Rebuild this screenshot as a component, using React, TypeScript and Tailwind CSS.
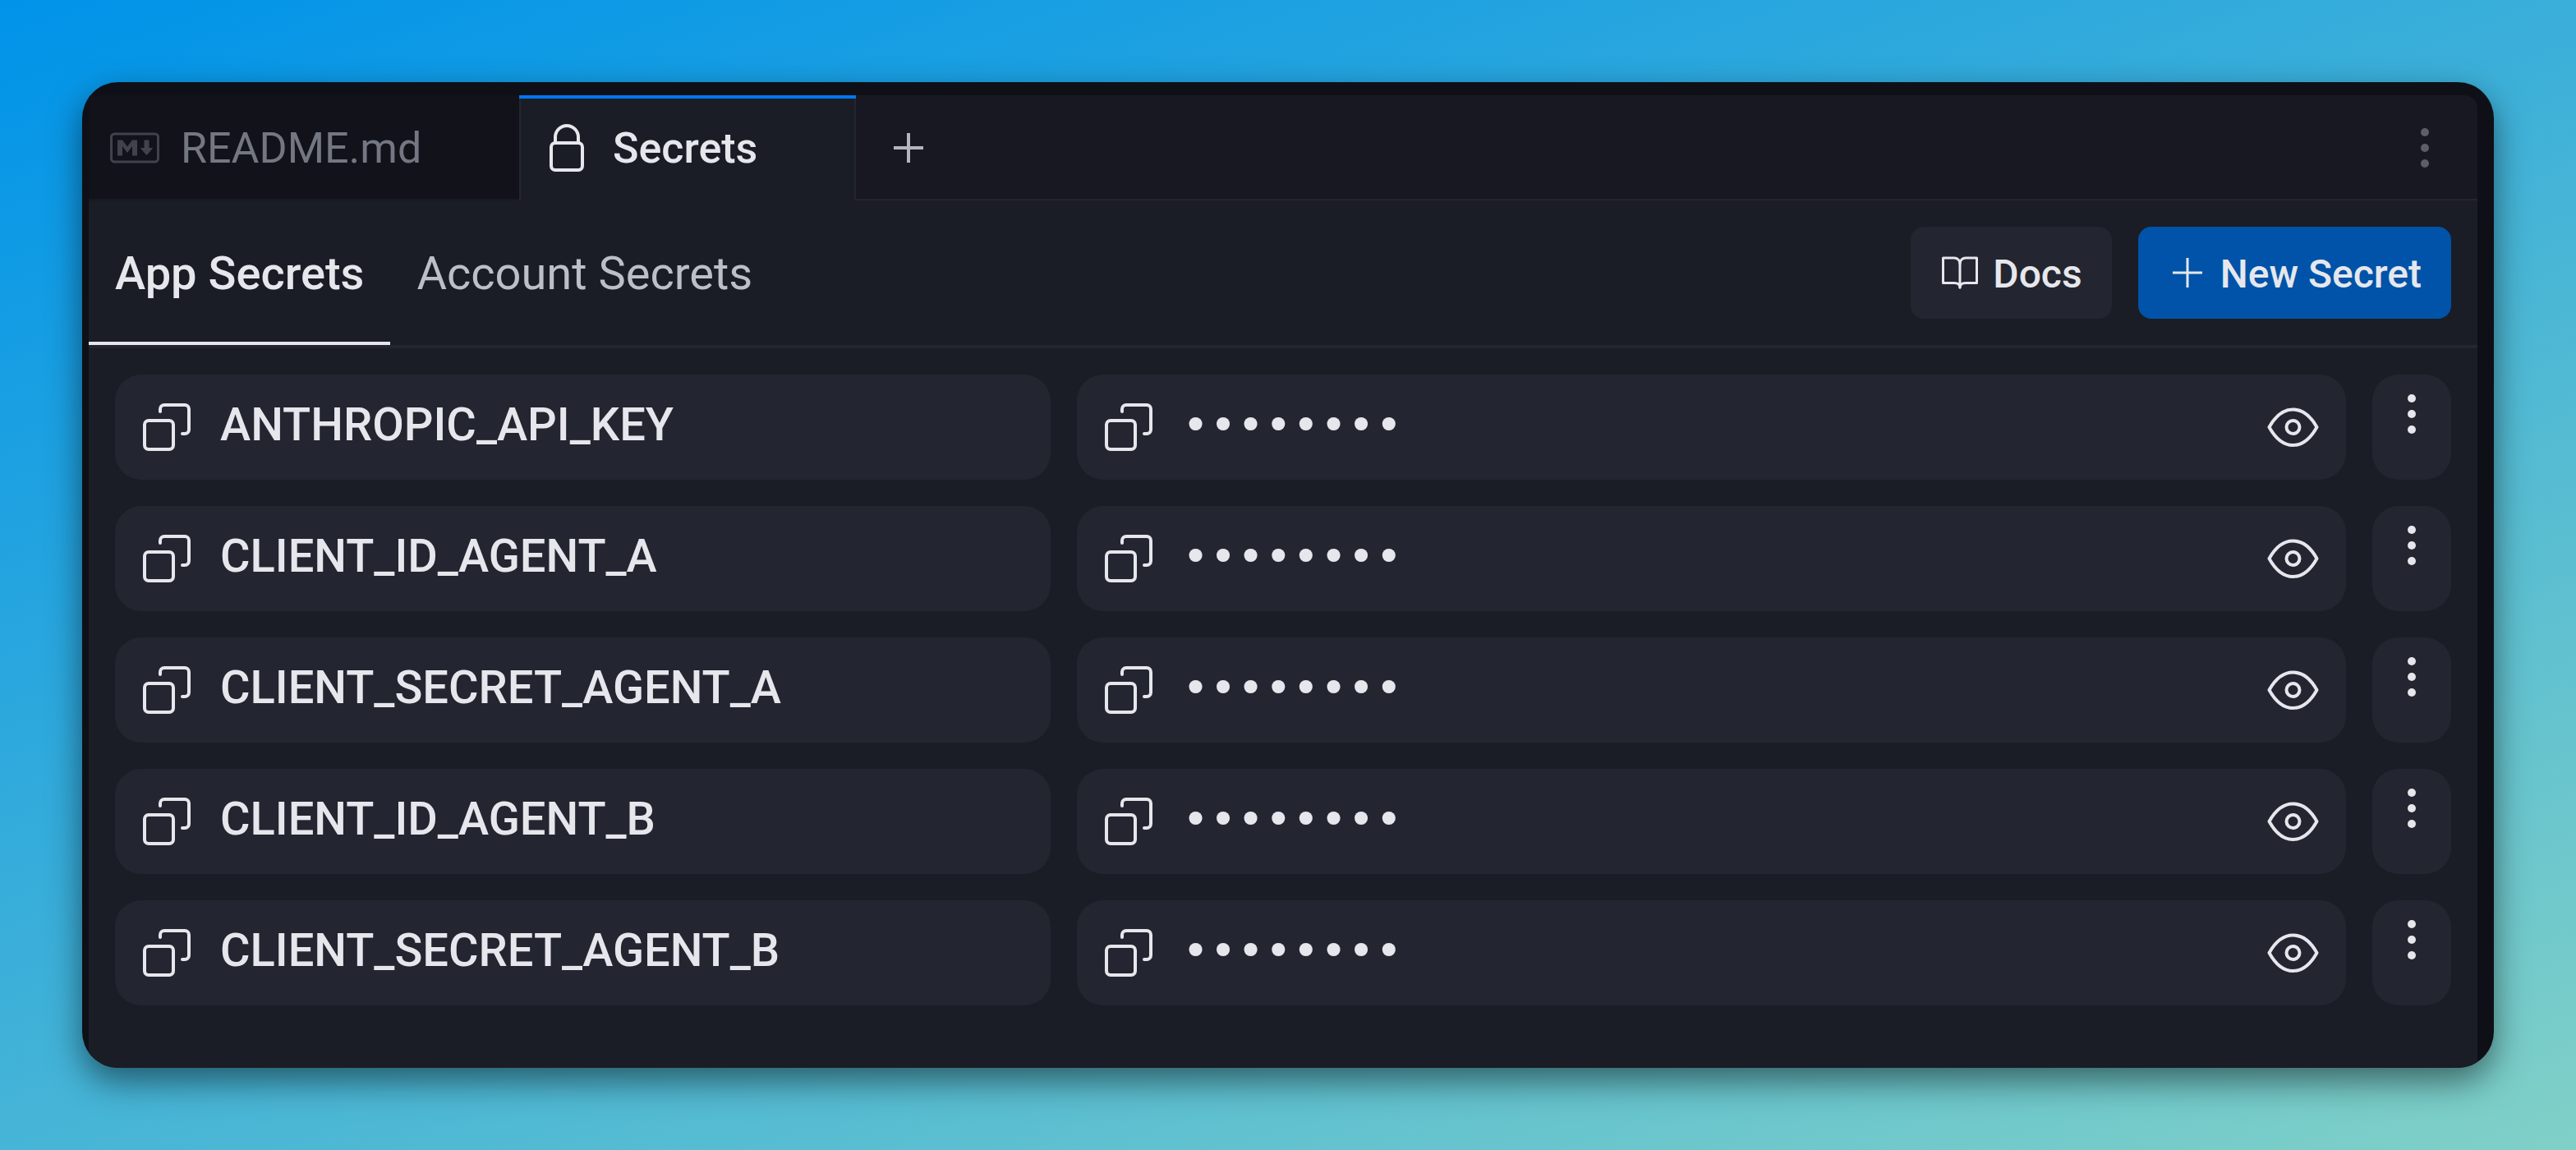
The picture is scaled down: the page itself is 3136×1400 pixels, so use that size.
import type { ReactNode } from 'react';

const SECRETS = [
  'ANTHROPIC_API_KEY',
  'CLIENT_ID_AGENT_A',
  'CLIENT_SECRET_AGENT_A',
  'CLIENT_ID_AGENT_B',
  'CLIENT_SECRET_AGENT_B',
];

function MarkdownIcon() {
  return (
    <svg className="size-16" viewBox="0 0 64 64" fill="none" stroke="currentColor" strokeLinejoin="round" aria-hidden="true">
      <rect x="3.500" y="15" width="57" height="34" rx="4" strokeWidth="3" />
      <path d="M11 41.500v-19h6l6 8 6-8h6v19h-6V30l-6 8-6-8v11.500Z" fill="currentColor" stroke="none" />
      <path d="M46.500 22.500V33" strokeWidth="6" />
      <path d="M39.500 32.500h14l-7 8Z" fill="currentColor" strokeWidth="1" />
    </svg>
  );
}

function LockIcon() {
  return (
    <svg className="size-16" viewBox="0 0 64 64" fill="none" stroke="currentColor" strokeWidth="4" strokeLinejoin="round" aria-hidden="true">
      <rect x="13" y="26" width="38" height="33" rx="5" />
      <path d="M18 26v-7a14 14 0 0 1 28 0v7" />
    </svg>
  );
}

function CopyIcon() {
  return (
    <svg className="size-16" viewBox="0 0 64 64" fill="none" stroke="currentColor" strokeWidth="4" strokeLinecap="round" aria-hidden="true">
      <rect x="4" y="24" width="35" height="35" rx="5" />
      <path d="M23 13v-3a5 5 0 0 1 5-5h25a5 5 0 0 1 5 5v25a5 5 0 0 1-5 5h-3" />
    </svg>
  );
}

function EyeIcon() {
  return (
    <svg className="size-16" viewBox="0 0 64 64" fill="none" stroke="currentColor" strokeWidth="4" strokeLinejoin="round" aria-hidden="true">
      <path d="M2.500 32C10 18.500 20 10.500 31.500 10.500S53 18.500 60.500 32C53 45.500 43 54 31.500 54S10 45.500 2.500 32Z" />
      <circle cx="31.500" cy="32" r="8" />
    </svg>
  );
}

function BookIcon() {
  return (
    <svg className="size-12" viewBox="0 0 48 48" fill="none" stroke="currentColor" strokeWidth="3" strokeLinecap="round" strokeLinejoin="round" aria-hidden="true">
      <path d="M24 13c0-4-3-7-7-7H3.500v30.500H17c4 0 7 1.500 7 5.500V13Z" />
      <path d="M24 13c0-4 3-7 7-7h13.500v30.500H31c-4 0-7 1.500-7 5.500" />
    </svg>
  );
}

function PlusIcon({ thin = false }: { thin?: boolean }) {
  return (
    <svg className="size-12" viewBox="0 0 48 48" fill="none" stroke="currentColor" strokeWidth={thin ? 3 : 4} aria-hidden="true">
      <path d="M24 6v36M6 24h36" />
    </svg>
  );
}

function DotsIcon() {
  return (
    <svg className="size-16" viewBox="0 0 64 64" fill="currentColor" aria-hidden="true">
      <circle cx="32" cy="13" r="5" />
      <circle cx="32" cy="32" r="5" />
      <circle cx="32" cy="51" r="5" />
    </svg>
  );
}

function Cell({ children }: { children: ReactNode }) {
  return <div className="flex h-32 items-center gap-8 rounded-4xl bg-[#232530] px-8">{children}</div>;
}

function SecretRow({ name }: { name: string }) {
  return (
    <li className="grid grid-cols-[14fr_19fr_96px] gap-8">
      <Cell>
        <button type="button" aria-label={`Copy name ${name}`}>
          <CopyIcon />
        </button>
        <span className="pb-1.5 text-[56px] leading-16 font-medium">{name}</span>
      </Cell>
      <Cell>
        <button type="button" aria-label={`Copy value of ${name}`}>
          <CopyIcon />
        </button>
        <span className="flex-1 font-['Liberation_Mono',monospace] text-[56px] leading-16 font-bold">••••••••</span>
        <button type="button" aria-label={`Show value of ${name}`}>
          <EyeIcon />
        </button>
      </Cell>
      <button type="button" aria-label={`More actions for ${name}`} className="flex h-32 items-start justify-center rounded-4xl bg-[#232530] pt-4">
        <DotsIcon />
      </button>
    </li>
  );
}

export default function App() {
  return (
    <div className="flex min-h-screen bg-[linear-gradient(160deg,#0093e9,#80d0c7)] p-[100px] font-[Roboto,sans-serif] text-[#e6e7ec]">
      <main className="flex flex-1 flex-col overflow-hidden rounded-[44px] bg-[#0f1017] pt-4 pr-5 pl-2 shadow-[0_16px_40px_rgba(0,0,0,0.5)]">
        <header className="flex h-32 rounded-tr-2xl bg-[#171821] text-[52px] leading-16">
          <button type="button" className="flex w-[524px] items-center gap-6 border-b-2 border-[#181922] bg-[#11121a] pt-0.5 pl-6 text-[#737781]">
            <span className="text-[#40434c]">
              <MarkdownIcon />
            </span>
            <span className="pt-0.5">README.md</span>
          </button>
          <button type="button" className="flex w-[410px] flex-col border-t-4 border-[#0078f2] bg-[#1a1d25]">
            <span className="flex w-full flex-1 items-center gap-6 border-x-2 border-[#232530] pb-1 pl-6 font-medium">
              <LockIcon />
              <span className="pt-0.5">Secrets</span>
            </span>
          </button>
          <div className="flex flex-1 items-center justify-between border-b-2 border-[#232530] pt-0.5">
            <button type="button" aria-label="New tab" className="flex w-32 justify-center text-[#b4b6bd]">
              <PlusIcon />
            </button>
            <button type="button" aria-label="Pane options" className="flex w-32 justify-center text-[#5c5f69]">
              <DotsIcon />
            </button>
          </div>
        </header>
        <section className="flex-1 bg-[#1a1d25]">
          <div className="flex h-[180px] items-start justify-between border-b-4 border-[#232530] pr-8">
            <nav className="flex h-full text-[56px] leading-16">
              <button type="button" className="h-44 border-b-4 border-[#e6e7ec] px-8 pt-1.5 font-medium">
                App Secrets
              </button>
              <button type="button" className="h-44 border-b-4 border-transparent px-8 pt-1.5 text-[#bcbfc9]">
                Account Secrets
              </button>
            </nav>
            <div className="flex gap-8 pt-8 text-5xl leading-14 font-medium">
              <button type="button" className="flex h-28 items-center gap-4 rounded-2xl bg-[#232530] px-9">
                <BookIcon />
                <span className="pt-1">Docs</span>
              </button>
              <button type="button" className="flex h-28 items-center gap-4 rounded-2xl bg-[#0053a8] px-9">
                <PlusIcon thin />
                <span className="pt-1">New Secret</span>
              </button>
            </div>
          </div>
          <ul className="flex flex-col gap-8 p-8">
            {SECRETS.map((name) => (
              <SecretRow key={name} name={name} />
            ))}
          </ul>
        </section>
      </main>
    </div>
  );
}
